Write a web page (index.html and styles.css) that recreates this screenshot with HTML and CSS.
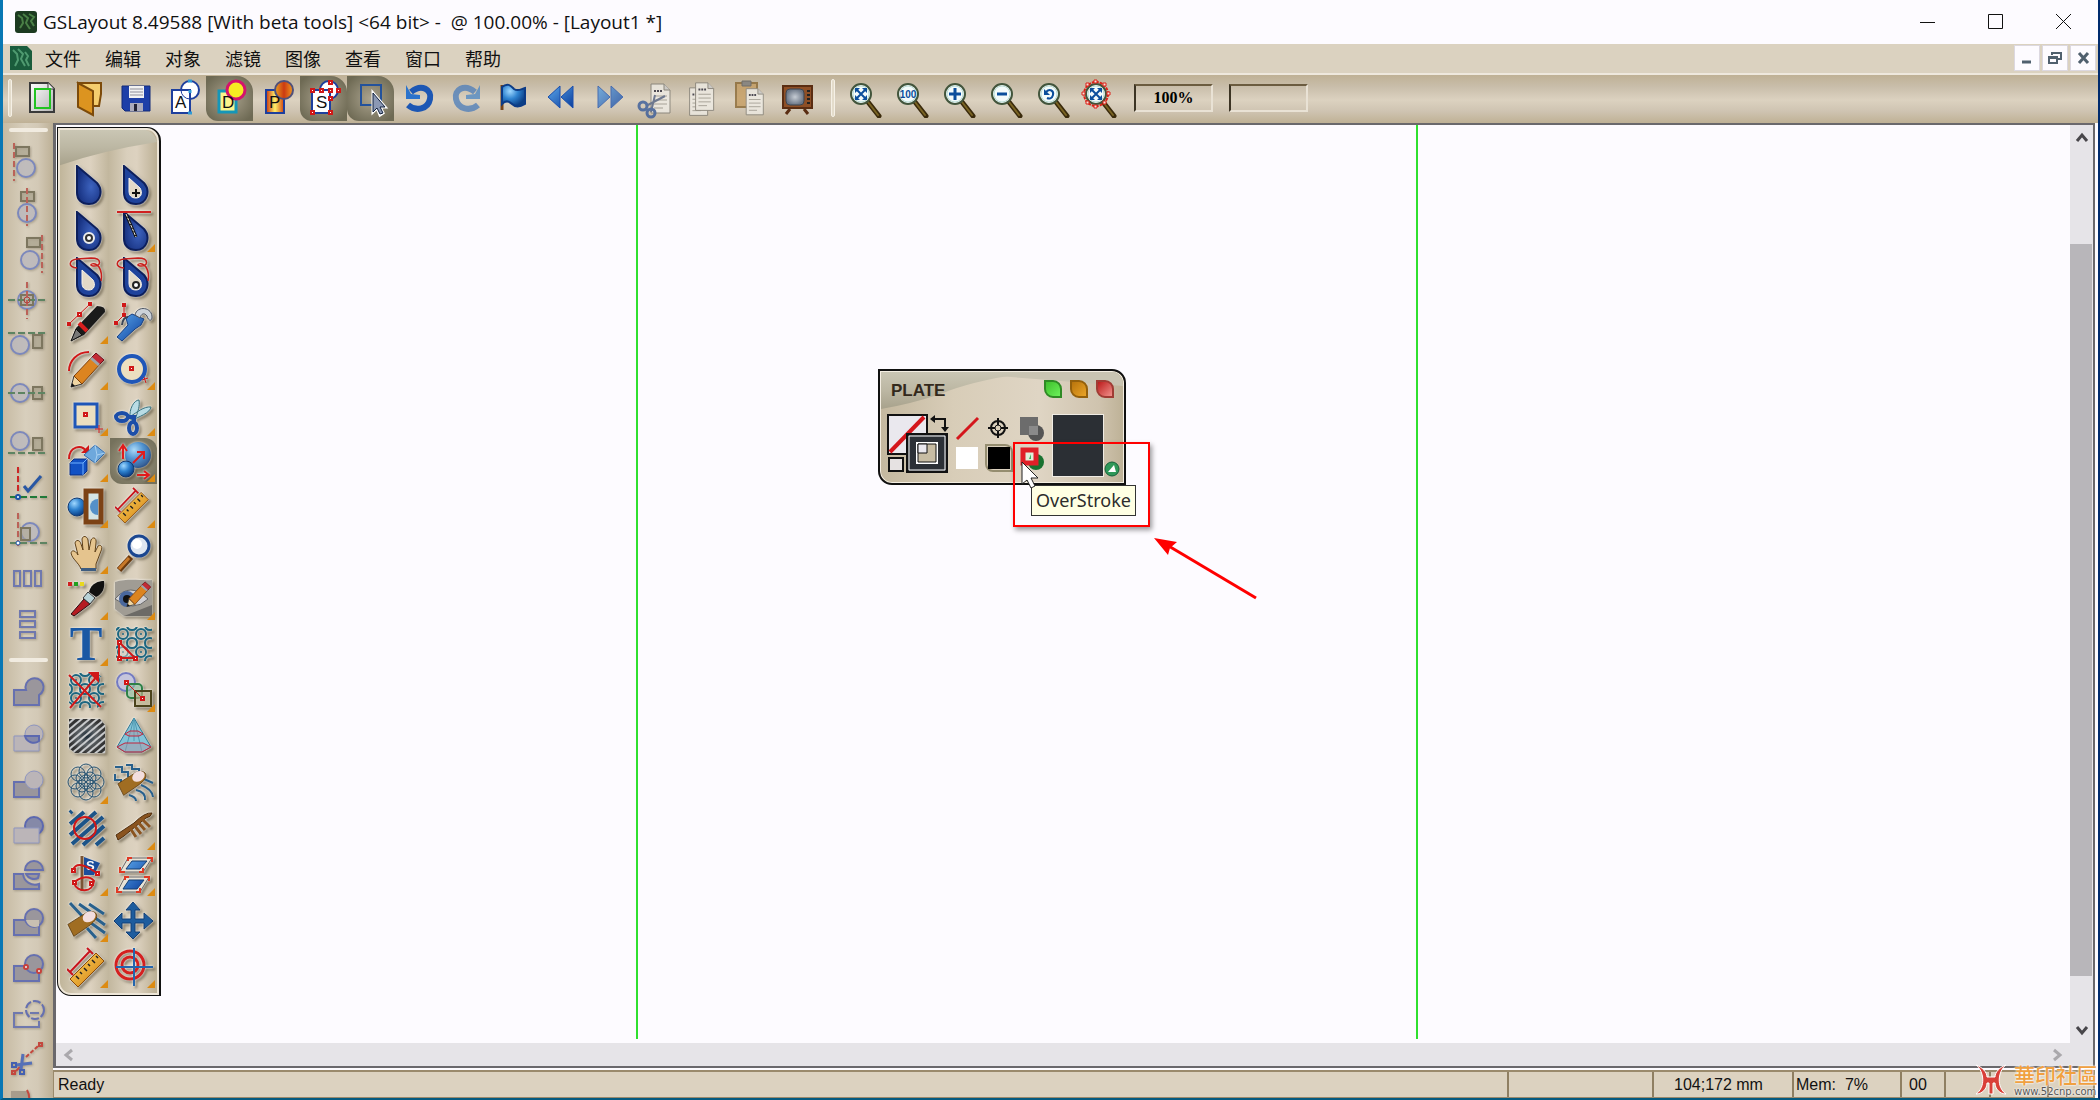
FILE: index.html
```html
<!DOCTYPE html>
<html lang="zh-CN">

<head>
  <meta charset="UTF-8" />
  <meta name="viewport" content="width=device-width, initial-scale=1.0" />
  <title>GSLayout</title>
  <link rel="stylesheet" href="styles.css">
</head>

<body>
  <!-- shared shapes and gradients -->
  <svg class="defs" width="0" height="0" aria-hidden="true">
    <defs>
      <linearGradient id="blue" x1="0" y1="0" x2="1" y2="1"><stop offset="0" stop-color="#5aa6ea" /><stop offset="1" stop-color="#0a3d9c" /></linearGradient>
      <radialGradient id="ball" cx=".35" cy=".3" r=".7"><stop offset="0" stop-color="#9fd8ff" /><stop offset=".5" stop-color="#2f83d0" /><stop offset="1" stop-color="#0b3f86" /></radialGradient>
      <radialGradient id="navy" cx=".6" cy=".55" r=".6"><stop offset="0" stop-color="#3d63bf" /><stop offset="1" stop-color="#16307f" /></radialGradient>
      <linearGradient id="gold" x1="0" y1="0" x2="1" y2="1"><stop offset="0" stop-color="#ffd95e" /><stop offset="1" stop-color="#d07a10" /></linearGradient>
      <linearGradient id="paper" x1="0" y1="0" x2="1" y2="1"><stop offset="0" stop-color="#fff" /><stop offset="1" stop-color="#b4b4b4" /></linearGradient>
      <linearGradient id="fire" x1="0" x2="1"><stop offset="0" stop-color="#c8300c" /><stop offset=".5" stop-color="#fff06a" /><stop offset="1" stop-color="#d0400c" /></linearGradient>
      <linearGradient id="fire2" x1="0" x2="1"><stop offset="0" stop-color="#e8a020" /><stop offset=".5" stop-color="#cc3a12" /><stop offset="1" stop-color="#f09a20" /></linearGradient>
      <radialGradient id="tube"><stop offset="0" stop-color="#c6ccd4" /><stop offset="1" stop-color="#6b7686" /></radialGradient>
      <radialGradient id="steel"><stop offset="0" stop-color="#1c2a36" /><stop offset=".5" stop-color="#5c6266" /><stop offset="1" stop-color="#333" /></radialGradient>
      <linearGradient id="sweep" x1="0" y1="0" x2="0" y2="1"><stop offset="0" stop-color="#cac6b4" /><stop offset=".5" stop-color="#bcb7a3" /><stop offset="1" stop-color="#a8a28c" /></linearGradient>
      <pattern id="hatch" width="5" height="5" patternUnits="userSpaceOnUse" patternTransform="rotate(50)"><rect width="2" height="5" fill="#c8cacc" /></pattern>
      <pattern id="rings" width="18" height="18" patternUnits="userSpaceOnUse"><circle cx="9" cy="9" r="5" fill="none" stroke="#1c6680" stroke-width="2" /><circle cx="9" cy="9" r="1" fill="#1c6680" /><path d="M0 5Q5 5 5 0M13 0Q13 5 18 5M0 13Q5 13 5 18M13 18Q13 13 18 13" fill="none" stroke="#1c6680" stroke-width="2" /></pattern>
    </defs>
    <symbol id="drop" viewBox="0 0 40 40">
      <path d="M10 1L30 18C37 26 33 39 22 39C14 39 10 34 10 28Z" fill="url(#navy)" stroke="#0d1f5c" stroke-width="2" />
    </symbol>
    <symbol id="drop-open" viewBox="0 0 40 40">
      <path d="M10 1L30 18C37 26 33 39 22 39C14 39 10 34 10 28Z" fill="#1f439c" stroke="#0d1f5c" stroke-width="2" />
      <path d="M15 13L26 23C29 28 27 33 22 33C17 33 15 30 15 26Z" fill="#e2d9c8" stroke="#f8f4ec" />
    </symbol>
    <symbol id="scribble" viewBox="0 0 40 40">
      <path d="M10 11C0 10 2 3 10 2L24 1C36 1 34 10 26 9C20 8 28 4 32 10C35 15 35 19 34 24" fill="none" stroke="#c8201c" stroke-width="1.5" />
    </symbol>
    <symbol id="lens" viewBox="0 0 40 40">
      <path d="M22 24L33 38" stroke="#3a2a0c" stroke-width="5" stroke-linecap="round" />
      <path d="M22 24L32 37" stroke="#7a6424" stroke-width="2" stroke-linecap="round" />
      <circle cx="15" cy="16" r="10" fill="#f4fbfb" stroke="#42553c" stroke-width="2" />
      <circle cx="15" cy="16" r="8" fill="none" stroke="#b8dcd4" stroke-width="1" />
    </symbol>
    <symbol id="expand" viewBox="0 0 40 40">
      <path d="M11 12L19 20M19 12L11 20" stroke="#0b4e9c" stroke-width="2" />
      <path d="M9 10H14L9 15ZM21 10V15L16 10ZM9 22V17L14 22ZM21 22H16L21 17Z" fill="#0b4e9c" />
    </symbol>
    <symbol id="sheet" viewBox="0 0 40 40">
      <path d="M8 3H21L27 9V32H8Z" fill="#f1efe9" stroke="#77746c" stroke-width="1" />
      <path d="M21 3V9H27" fill="#ccc" stroke="#77746c" stroke-width="1" />
      <path d="M11 10H19" stroke="#223" stroke-width="2" stroke-dasharray="2 1" />
      <path d="M11 15H24M11 19H24M11 23H24M11 27H20" stroke="#96938b" stroke-width="1" />
    </symbol>
    <symbol id="finger" viewBox="0 0 40 40">
      <path d="M1 24L20 12C26 7 36 8 35 15C34 20 28 24 24 27L8 38Z" fill="#a06d22" stroke="#5d3c10" stroke-width="1" />
      <ellipse cx="26" cy="15" rx="8" ry="6" fill="#f3dede" transform="rotate(-30 26 15)" />
    </symbol>
    <symbol id="ruler" viewBox="0 0 40 40">
      <path d="M3 32L29 6L37 14L11 40Z" fill="url(#gold)" stroke="#8a4a08" stroke-width="1" />
      <path d="M9 29l3 3M13 25l2 2M17 21l3 3M21 17l2 2M25 13l3 3M29 9l2 2" stroke="#222" stroke-width="1.5" />
      <path d="M0 22L6 28M20 1L26 7M3 25L23 4" fill="none" stroke="#c8141c" stroke-width="2" />
    </symbol>
    <symbol id="pencil" viewBox="0 0 40 40">
      <path d="M4 38L7 27L15 35Z" fill="#f0d6a4" stroke="#333" />
      <path d="M7 27L26 7L34 14L15 35Z" fill="#dc8420" stroke="#7a3d08" />
      <path d="M24 9L29 4L37 11L32 16Z" fill="#c22a34" stroke="#6a1018" />
      <path d="M23 10L25 8L33 15L31 17Z" fill="#9ca3ab" />
      <path d="M4 38L5 34L8 37Z" fill="#111" />
    </symbol>
  </svg>

  <header class="titlebar">
    <svg class="app-icon" viewBox="0 0 22 22"><rect width="22" height="22" rx="3" fill="#1c3a20" /><path d="M3 4l4 3 1 5-3 5M8 3l5 4-2 5 4 6M14 3l5 3-3 4 3 5" fill="none" stroke="#4a8046" stroke-width="2" /></svg>
    <h1>GSLayout 8.49588 [With beta tools] &lt;64 bit&gt; -&nbsp; @ 100.00% - [Layout1 *]</h1>
    <div class="window-controls">
      <button aria-label="Minimize"><svg viewBox="0 0 16 16"><path d="M0 8.500H15" /></svg></button>
      <button aria-label="Maximize"><svg viewBox="0 0 16 16"><path d="M.5.5H14.500V14.500H.5Z" /></svg></button>
      <button aria-label="Close"><svg viewBox="0 0 16 16"><path d="M0 0L15 15M15 0L0 15" /></svg></button>
    </div>
  </header>

  <nav class="menubar">
    <svg class="doc-icon" viewBox="0 0 22 24"><path d="M0 0H17L22 5V24H0Z" fill="#1a5c3c" /><path d="M3 4l4 4 1 6-3 6M8 3l5 5-2 5 4 7M15 6l3 4-2 4 3 6" fill="none" stroke="#4f9a70" stroke-width="2" /></svg>
    <div class="menus">
      <button>文件</button>
      <button>编辑</button>
      <button>对象</button>
      <button>滤镜</button>
      <button>图像</button>
      <button>查看</button>
      <button>窗口</button>
      <button>帮助</button>
    </div>
    <div class="mdi-controls">
      <button aria-label="Minimize document"><svg viewBox="0 0 14 14"><path d="M2 11H11" stroke-width="3" /></svg></button>
      <button aria-label="Restore document"><svg viewBox="0 0 14 14"><path d="M4 4V2H13V8H10M4 2H13" stroke-width="2" /><path d="M1 6H9V12H1ZM1 7H9" stroke-width="2" /></svg></button>
      <button aria-label="Close document"><svg viewBox="0 0 14 14"><path d="M3 2L12 12M12 2L3 12" stroke-width="3" /></svg></button>
    </div>
  </nav>

  <div class="toolbar">
    <span class="grip"></span>
    <div class="tool-group">
      <button aria-label="New"><svg viewBox="0 0 40 40"><path d="M8 5H26L32 11V34H8Z" fill="url(#paper)" stroke="#3a3a3a" stroke-width="2" /><path d="M26 5V11H32" fill="#eee" stroke="#3a3a3a" /><path d="M13 11H28V30H13Z" fill="none" stroke="#22c322" stroke-width="2" /></svg></button>
      <button aria-label="Open"><svg viewBox="0 0 40 40"><path d="M9 5H32V16L30 28H20Z" fill="#f4cd6e" stroke="#7d4b0a" stroke-width="2" /><path d="M9 5L24 13V37L9 29Z" fill="#dc9420" stroke="#7d4b0a" stroke-width="2" /></svg></button>
      <button aria-label="Save"><svg viewBox="0 0 40 40"><path d="M6 8H34V33H9L6 30Z" fill="#1d3fa8" stroke="#122a78" /><path d="M13 8H28V20H13Z" fill="#f2f2f2" /><path d="M14 11H27M14 14H27M14 17H27" stroke="#8e8e9a" /><path d="M14 25H27V33H14Z" fill="#aab" /><path d="M18 26H21V33H18Z" fill="#223" /></svg></button>
      <button aria-label="Artwork view"><svg viewBox="0 0 40 40"><circle cx="27" cy="12" r="9" fill="#fff" stroke="#1e3f9e" stroke-width="2" /><path d="M9 12H27V35H9Z" fill="#fff" stroke="#1e3f9e" stroke-width="2" /><path d="M18 12A9 9 0 0 0 27 21" fill="none" stroke="#1e3f9e" stroke-width="1" /><path d="M25 3h4M27 12V15M25 35h4" stroke="#2e9ad6" stroke-width="3" /><text x="12" y="30" class="badge-letter">A</text></svg></button>
      <button class="active" aria-label="Draft view"><svg viewBox="0 0 40 40"><path d="M9 13H26V34H9Z" fill="#fbf48c" stroke="#1596b8" stroke-width="3" /><circle cx="26" cy="12" r="9" fill="#f6ec22" stroke="#d4146c" stroke-width="3" /><text x="12" y="30" class="badge-letter">D</text></svg></button>
      <button aria-label="Preview"><svg viewBox="0 0 40 40"><path d="M9 12H27V35H9Z" fill="url(#fire)" stroke="#1e3f9e" stroke-width="2" /><circle cx="27" cy="12" r="9" fill="url(#fire2)" stroke="#50507a" stroke-width="2" /><text x="12" y="30" class="badge-letter">P</text></svg></button>
      <button class="active" aria-label="Selection view"><svg viewBox="0 0 40 40"><circle cx="25" cy="12" r="9" fill="#fff" stroke="#1e3f9e" stroke-width="2" /><path d="M8 12H26V35H8Z" fill="#fff" stroke="#1e3f9e" stroke-width="2" /><path d="M7 11h3v3H7ZM16 11h3v3h-3ZM25 11h3v3h-3ZM33 11h3v3h-3ZM25 3h3v3h-3ZM25 19h3v3h-3ZM25 33h3v3h-3ZM7 33h3v3H7Z" fill="#fff" stroke="#d01818" stroke-width="2" /><text x="12" y="30" class="badge-letter">S</text></svg></button>
      <button class="active" aria-label="Select box"><svg viewBox="0 0 40 40"><path d="M10 7H30V27H10Z" fill="none" stroke="#23529c" stroke-width="2" /><path d="M22 15V34L26 30L29 37L32 35L29 29H34Z" fill="#aab4c8" stroke="#fff" stroke-width="3" /><path d="M22 15V34L26 30L29 36L32 35L29 29H34Z" fill="#8b98b4" stroke="#10203c" stroke-width="1" /></svg></button>
      <button aria-label="Undo"><svg viewBox="0 0 40 40"><path d="M13 14C24 5 34 12 32 21C30 31 18 34 10 27" fill="none" stroke="#1c57b4" stroke-width="6" /><path d="M8 7V21H22V17L13 16Z" fill="#2b73cc" /></svg></button>
      <button class="faded" aria-label="Redo"><svg viewBox="0 0 40 40"><path d="M30 14C19 5 9 12 11 21C13 31 25 34 33 27" fill="none" stroke="#4a7cba" stroke-width="6" /><path d="M35 7V21H21V17L30 16Z" fill="#4a86c4" /></svg></button>
      <button aria-label="Flag"><svg viewBox="0 0 40 40"><path d="M10 7V32" stroke="#76441a" stroke-width="3" /><path d="M10 9C16 4 19 8 22 11C26 14 29 11 33 10V26C28 29 24 30 20 26C17 23 14 22 10 26Z" fill="url(#ball)" stroke="#0c3b86" stroke-width="2" /></svg></button>
      <button aria-label="Previous"><svg viewBox="0 0 40 40"><path d="M21 8V30L9 19ZM34 8V30L22 19Z" fill="url(#blue)" stroke="#1a4fae" /></svg></button>
      <button class="faded" aria-label="Next"><svg viewBox="0 0 40 40"><path d="M12 8V30L24 19ZM25 8V30L37 19Z" fill="url(#blue)" stroke="#1a4fae" /></svg></button>
      <button class="faded" aria-label="Cut"><svg viewBox="0 0 40 40"><use href="#sheet" x="10" y="3" width="40" height="40" /><path d="M13 28L32 18M18 34L22 17" stroke="#4a5c80" stroke-width="2" /><circle cx="10" cy="28" r="4" fill="none" stroke="#2e5498" stroke-width="3" /><circle cx="18" cy="35" r="4" fill="none" stroke="#2e5498" stroke-width="3" /></svg></button>
      <button class="faded" aria-label="Copy"><svg viewBox="0 0 40 40"><use href="#sheet" x="2" y="7" width="38" height="38" /><use href="#sheet" x="8" y="2" width="38" height="38" /></svg></button>
      <button class="faded" aria-label="Paste"><svg viewBox="0 0 40 40"><path d="M9 5H30V29H9Z" fill="#c49a5c" stroke="#86632c" stroke-width="2" /><path d="M15 3H24V8H15Z" fill="#777" stroke="#555" /><use href="#sheet" x="12" y="8" width="36" height="36" /></svg></button>
      <button aria-label="Monitor"><svg viewBox="0 0 40 40"><path d="M16 31L12 36M30 31L34 36" stroke="#5a2d12" stroke-width="3" /><path d="M9 8H38V30H9Z" fill="#8e4f26" stroke="#5a2d12" stroke-width="2" /><rect x="12" y="11" width="18" height="16" rx="4" fill="url(#tube)" stroke="#3f4650" /><path d="M33 13h3M33 17h3M33 21h3M33 25h3" stroke="#222" stroke-width="2" /></svg></button>
    </div>
    <span class="grip"></span>
    <div class="tool-group zoom-group">
      <button aria-label="Fit window"><svg viewBox="0 0 40 40"><use href="#lens" /><use href="#expand" /></svg></button>
      <button aria-label="Actual size"><svg viewBox="0 0 40 40"><use href="#lens" /><text x="15" y="20" class="lens-text">100</text></svg></button>
      <button aria-label="Zoom in"><svg viewBox="0 0 40 40"><use href="#lens" /><path d="M9 16H21M15 10V22" stroke="#0b4e9c" stroke-width="3" /></svg></button>
      <button aria-label="Zoom out"><svg viewBox="0 0 40 40"><use href="#lens" /><path d="M10 16H20" stroke="#0b4e9c" stroke-width="3" /></svg></button>
      <button aria-label="Previous zoom"><svg viewBox="0 0 40 40"><use href="#lens" /><path d="M12 14C16 10 20 13 19 17C18 21 15 21 13 20" fill="none" stroke="#0b4e9c" stroke-width="2" /><path d="M10 11V17H16Z" fill="#0b4e9c" /></svg></button>
      <button aria-label="Zoom to selection"><svg viewBox="0 0 40 40"><use href="#lens" /><use href="#expand" /><circle cx="15" cy="16" r="12" fill="none" stroke="#dc2018" stroke-width="2" stroke-dasharray="3 1" /><path d="M13 2h3v3h-3ZM13 27h3v3h-3ZM1 14h3v3H1ZM26 14h3v3h-3ZM5 5h3v3H5ZM22 5h3v3h-3ZM5 23h3v3H5ZM22 23h3v3h-3Z" fill="#f6e0d8" stroke="#dc2018" /></svg></button>
    </div>
    <input class="field" type="text" value="100%" aria-label="Zoom level">
    <input class="field" type="text" value="" aria-label="Value">
  </div>

  <main class="workspace">
    <aside class="sidebar">
      <span class="rule"></span>
      <button aria-label="Align left"><svg viewBox="0 0 40 40"><path class="v" d="M6 2V40" /><path class="box" d="M8 6H21V15H8Z" /><circle class="disc" cx="18" cy="27" r="9" /></svg></button>
      <button aria-label="Align centre"><svg viewBox="0 0 40 40"><path class="box" d="M13 5H26V14H13Z" /><circle class="disc" cx="19" cy="26" r="9" /><path class="v" d="M19 1V39" /></svg></button>
      <button aria-label="Align right"><svg viewBox="0 0 40 40"><path class="v" d="M34 2V40" /><path class="box" d="M19 5H32V14H19Z" /><circle class="disc" cx="22" cy="27" r="9" /></svg></button>
      <button aria-label="Centre both"><svg viewBox="0 0 40 40"><circle class="disc" cx="19" cy="21" r="9" /><path class="box" d="M13 16H25V26H13Z" /><path class="v" d="M19 3V40" /><path class="h" d="M0 21H40" /><circle cx="19" cy="21" r="3" fill="none" stroke="#b5403a" /></svg></button>
      <button aria-label="Align top"><svg viewBox="0 0 40 40"><path class="h" d="M0 8H39" /><circle class="disc" cx="12" cy="20" r="9" /><path class="box" d="M25 10H34V23H25Z" /></svg></button>
      <button aria-label="Align middle"><svg viewBox="0 0 40 40"><circle class="disc" cx="12" cy="22" r="9" /><path class="box" d="M25 16H34V28H25Z" /><path class="h" d="M0 22H39" /></svg></button>
      <button aria-label="Align bottom"><svg viewBox="0 0 40 40"><circle class="disc" cx="12" cy="24" r="9" /><path class="box" d="M25 21H34V33H25Z" /><path class="h" d="M0 36H39" /></svg></button>
      <button aria-label="Set origin" class="strong"><svg viewBox="0 0 40 40"><path class="v" d="M10 4V40" /><path class="h" d="M2 34H39" /><circle cx="10" cy="34" r="2" fill="#fff" stroke="#1a55a8" stroke-width="2" /><path d="M16 23L20 28L33 13" fill="none" stroke="#2957a4" stroke-width="3" /></svg></button>
      <button aria-label="Move to origin"><svg viewBox="0 0 40 40"><path class="v" d="M10 4V40" /><path class="h" d="M2 34H39" /><circle class="disc" cx="22" cy="23" r="9" /><path class="box" d="M13 19H22V31H13Z" /><circle cx="10" cy="34" r="2" fill="#fff" stroke="#1a55a8" /></svg></button>
      <button aria-label="Distribute columns"><svg viewBox="0 0 40 40"><path class="bars" d="M6 16H12V31H6ZM16 16H23V31H16ZM27 16H33V31H27Z" /></svg></button>
      <button aria-label="Distribute rows"><svg viewBox="0 0 40 40"><path class="bars" d="M12 10H27V16H12ZM12 20H27V26H12ZM12 31H27V37H12Z" /></svg></button>
      <span class="rule"></span>
      <button aria-label="Unite"><svg viewBox="0 0 40 40"><path class="solid" d="M6 19H18A9 9 0 1 1 31 24V34H6Z" /></svg></button>
      <button aria-label="Intersect"><svg viewBox="0 0 40 40"><path class="light" d="M6 19H31V34H6Z" /><circle class="light" cx="26" cy="17" r="9" /><path class="dark" d="M17 19H31V24A9 9 0 0 1 17 19Z" /></svg></button>
      <button aria-label="Subtract front"><svg viewBox="0 0 40 40"><path class="solid" d="M6 19H31V34H6Z" /><circle class="light" cx="26" cy="17" r="9" /></svg></button>
      <button aria-label="Subtract back"><svg viewBox="0 0 40 40"><circle class="dark" cx="26" cy="17" r="9" /><path class="light" d="M6 19H31V34H6Z" /></svg></button>
      <button aria-label="Divide"><svg viewBox="0 0 40 40"><path class="solid" d="M6 19H15A12 12 0 0 0 31 29V34H6Z" /><path class="solid" d="M17 15A9 9 0 0 1 35 15ZM18 19H31L30 23A9 9 0 0 1 18 19Z" /></svg></button>
      <button aria-label="Trim"><svg viewBox="0 0 40 40"><path class="solid" d="M6 19H31V34H6Z" /><circle class="solid" cx="26" cy="17" r="9" /><path d="M18 19H31V25A9 9 0 0 1 18 19Z" fill="#c9c0b2" /></svg></button>
      <button aria-label="Add nodes"><svg viewBox="0 0 40 40"><path class="solid" d="M6 19H31V34H6Z" /><circle class="solid" cx="26" cy="17" r="9" /><circle cx="18" cy="20" r="2" fill="#eee" stroke="#c8403a" stroke-width="2" /><circle cx="31" cy="24" r="2" fill="#eee" stroke="#c8403a" stroke-width="2" /></svg></button>
      <button aria-label="Outline"><svg viewBox="0 0 40 40"><path class="bars" d="M15 20H6V34H31V28" /><circle cx="27" cy="17" r="9" fill="none" stroke="#6670b0" stroke-width="2" stroke-dasharray="8 2" /><path class="bars" d="M22 20H31" /></svg></button>
      <button aria-label="Cut path"><svg viewBox="0 0 40 40"><path d="M18 18L30 7" stroke="#c4483e" stroke-width="2" stroke-dasharray="4 2" /><path d="M31 4h3v3h-3ZM4 32h3v3H4ZM8 32l4-4" fill="none" stroke="#c4483e" stroke-width="2" /><path d="M8 26L24 24M13 30L15 15" stroke="#5570b8" stroke-width="3" /><path d="M4 24h4v4H4ZM12 31h4v4h-4Z" fill="none" stroke="#4460b0" stroke-width="2" /></svg></button>
      <button aria-label="Join path"><svg viewBox="0 0 40 40"><path d="M3 6H20V34H3Z" fill="#a69c8c" /><path d="M19 5Q23 12 20 20" fill="none" stroke="#c4483e" stroke-width="2" /></svg></button>
    </aside>

    <div class="content">
      <div class="viewport">
        <section class="canvas">
          <span class="guide guide-left"></span>
          <span class="guide guide-right"></span>

          <div class="tools">
            <svg class="tools-sweep" viewBox="0 0 100 40" preserveAspectRatio="none"><path d="M0 0H88Q97 2 100 13Q45 22 0 38Z" fill="url(#sweep)" /></svg>
            <button aria-label="Select"><svg viewBox="0 0 40 40"><use href="#drop" /></svg></button>
            <button aria-label="Add point"><svg viewBox="0 0 40 40"><use href="#drop-open" /><path d="M18 28H26M22 24V32" stroke="#111" stroke-width="2" /></svg></button>
            <button aria-label="Edit point"><svg viewBox="0 0 40 40"><use href="#drop" /><circle cx="22" cy="27" r="5" fill="#333" stroke="#eee" stroke-width="2" /><circle cx="22" cy="27" r="2" fill="#fff" /></svg></button>
            <button class="more" aria-label="Cut point"><svg viewBox="0 0 40 40"><use href="#drop" /><path d="M12 3L22 26" stroke="#111" stroke-width="3" /><path d="M12 3L22 26" stroke="#eee" stroke-width="1" stroke-dasharray="3 1" /><path d="M3 1H37" stroke="#d02020" stroke-width="2" /></svg></button>
            <button aria-label="Lasso"><svg viewBox="0 0 40 40"><use href="#drop-open" /><use href="#scribble" /></svg></button>
            <button aria-label="Lasso point"><svg viewBox="0 0 40 40"><use href="#drop-open" /><circle cx="22" cy="28" r="3" fill="#fff" stroke="#222" stroke-width="2" /><use href="#scribble" /></svg></button>
            <button class="more" aria-label="Pen"><svg viewBox="0 0 40 40"><path d="M2 21L23 1" stroke="#d01818" stroke-width="1" /><path d="M11 10h3v3h-3ZM1 20h2v2H1ZM22 0h2v2h-2Z" fill="#fff" stroke="#d01818" stroke-width="2" /><path d="M4 38L9 25L30 3Q39 3 38 9L17 32Z" fill="#1a1a1a" /><path d="M12 20L20 28" stroke="#d81e1e" stroke-width="4" /><path d="M4 38L9 26L15 32Z" fill="#777" stroke="#111" /></svg></button>
            <button aria-label="Wrench"><svg viewBox="0 0 40 40"><path d="M2 20L10 12V3" fill="none" stroke="#d01818" /><path d="M1 19h2v2H1ZM9 11h2v2H9ZM9 1h2v2H9Z" fill="#fff" stroke="#d01818" stroke-width="2" /><path d="M3 34L14 22L12 15L18 11L30 16L27 22L21 26L8 38Z" fill="url(#blue)" stroke="#123c80" /><path d="M8 22Q9 14 14 14" fill="none" stroke="#3a4656" stroke-width="2" /><path d="M21 12C23 2 39 4 38 15C37 19 34 17 33 13C30 9 27 11 26 15Z" fill="#ccd2da" stroke="#4a5260" /></svg></button>
            <button class="more" aria-label="Pencil"><svg viewBox="0 0 40 40"><path d="M2 22C2 12 10 3 22 3" fill="none" stroke="#d01818" stroke-width="2" /><use href="#pencil" /></svg></button>
            <button class="more" aria-label="Ellipse"><svg viewBox="0 0 40 40"><circle cx="18" cy="20" r="13" fill="#ecdfc0" stroke="#1f56b8" stroke-width="4" /><path d="M16 18h3v3h-3Z" fill="#fff" stroke="#d01818" stroke-width="2" /><path d="M28 31l6-2M30 28l2 6" stroke="#d01818" stroke-width="1" /></svg></button>
            <button class="more" aria-label="Rectangle"><svg viewBox="0 0 40 40"><path d="M8 9H30V32H8Z" fill="#ecdfc0" stroke="#1f56b8" stroke-width="3" /><path d="M17 18h3v3h-3Z" fill="#fff" stroke="#d01818" stroke-width="2" /><path d="M28 34h8M32 30v8" stroke="#d01818" stroke-width="1" /></svg></button>
            <button class="more" aria-label="Scissors"><svg viewBox="0 0 40 40"><path d="M16 23C15 14 20 5 25 5C26 11 24 16 22 22ZM17 25C24 23 37 17 37 12C30 11 22 18 17 21Z" fill="#b9dce4" stroke="#35707c" /><ellipse cx="8" cy="22" rx="6" ry="4" fill="none" stroke="#1c4ea8" stroke-width="4" /><ellipse cx="19" cy="33" rx="4" ry="6" fill="none" stroke="#1c4ea8" stroke-width="4" /><path d="M12 22H20V29" fill="none" stroke="#1c4ea8" stroke-width="4" /></svg></button>
            <button class="more" aria-label="Rotate"><svg viewBox="0 0 40 40"><path d="M2 18C2 6 14 2 20 11" fill="none" stroke="#d01818" stroke-width="2" /><path d="M14 12H22V4Z" fill="#d01818" /><path d="M17 14L28 4L38 12L28 22Z" fill="#6ea8dc" stroke="#3568a4" /><path d="M28 4L30 14L38 12M30 14L28 22" fill="none" stroke="#a9d0f0" /><path d="M3 22L7 18H20V30L16 34H3Z" fill="#1251c4" stroke="#0a2f80" /><path d="M3 22H16V34M16 22L20 18" fill="none" stroke="#6fb0ff" /></svg></button>
            <button class="more active" aria-label="Scale"><svg viewBox="0 0 40 40"><circle cx="24" cy="14" r="13" fill="url(#ball)" opacity=".8" /><circle cx="12" cy="28" r="8" fill="url(#ball)" stroke="#11376c" /><path d="M9 18V5M5 10L9 4L13 10M19 22L29 12M23 11H30V18M23 34H35M30 30L35 34L30 38" fill="none" stroke="#e01c1c" stroke-width="2" /></svg></button>
            <button class="more" aria-label="Mirror"><svg viewBox="0 0 40 40"><circle cx="10" cy="20" r="9" fill="url(#ball)" stroke="#11376c" /><path d="M19 4H34V35H19Z" fill="#d5e4e4" stroke="#7c4215" stroke-width="5" /><path d="M31 12A8 8 0 0 0 31 28Z" fill="#5490c8" /></svg></button>
            <button class="more" aria-label="Measure"><svg viewBox="0 0 40 40"><use href="#ruler" width="36" height="36" x="1" y="0" /></svg></button>
            <button class="more" aria-label="Hand"><svg viewBox="0 0 40 40"><path d="M14 36C12 30 5 26 4 20C5 16 9 18 11 22L8 10C9 6 13 7 14 11L16 17L15 6C16 2 20 3 21 7L22 17L24 7C26 3 30 5 29 10L28 19L31 13C34 11 36 14 34 18L29 31V36Z" fill="#e5c48e" stroke="#5d3f17" stroke-width="1" /><path d="M14 35H29V38H14Z" fill="#3d5c80" /></svg></button>
            <button aria-label="Zoom"><svg viewBox="0 0 40 40"><path d="M5 37L17 24" stroke="#6b3a0e" stroke-width="6" /><path d="M5 36L15 25" stroke="#c8792a" stroke-width="3" /><circle cx="25" cy="13" r="10" fill="#dfe6f0" stroke="#1a4690" stroke-width="3" /><circle cx="23" cy="11" r="5" fill="#fff" /></svg></button>
            <button class="more" aria-label="Brush"><svg viewBox="0 0 40 40"><path d="M1 3h4v4H1Z" fill="#d02020" /><path d="M7 3h4v4H7Z" fill="#20a020" /><path d="M13 3h4v4h-4Z" fill="#e8d820" /><path d="M4 35L17 20L23 25L7 37Z" fill="#b51b22" stroke="#2a0a0c" /><path d="M16 19L21 13L28 19L23 25Z" fill="#b9d3d8" stroke="#333" /><path d="M22 13C24 4 32 2 37 2C38 8 36 15 29 18Z" fill="#111" /></svg></button>
            <button class="more" aria-label="Retouch"><svg viewBox="0 0 40 40"><path d="M1 3C14 -1 28 2 38 1V37H10L1 30Z" fill="#a09c94" /><path d="M1 20Q16 2 34 20Q20 34 1 20" fill="#d0d0d4" stroke="#666" /><circle cx="13" cy="20" r="8" fill="#49679c" /><circle cx="13" cy="20" r="4" fill="#111" /><path d="M10 37L38 26V37Z" fill="#6c6a66" /><use href="#pencil" x="10" y="0" width="29" height="29" /></svg></button>
            <button class="more" aria-label="Text"><svg viewBox="0 0 40 40"><text x="19" y="35" class="big-t">T</text></svg></button>
            <button aria-label="Pattern"><svg viewBox="0 0 40 40"><path d="M2 2H38V36H2Z" fill="url(#rings)" /><path d="M5 17V33H21Z" fill="#e0d8c8" fill-opacity=".5" stroke="#d01818" stroke-width="2" /><path d="M4 16h3v3H4ZM4 32h3v3H4ZM20 32h3v3h-3Z" fill="#fff" stroke="#d01818" stroke-width="2" /></svg></button>
            <button aria-label="Remove pattern"><svg viewBox="0 0 40 40"><path d="M2 8L8 2H30L37 8V32L30 37H8L2 32Z" fill="url(#rings)" /><path d="M2 4L34 36M3 37L30 5" stroke="#d01818" stroke-width="2" /><path d="M21 1H32V12Z" fill="#d01818" /></svg></button>
            <button class="more" aria-label="Blend"><svg viewBox="0 0 40 40"><circle cx="12" cy="11" r="9" fill="#c5c5dc" stroke="#4a56b8" stroke-width="2" stroke-opacity=".7" /><rect x="13" y="13" width="15" height="14" rx="4" fill="#8fc09c" stroke="#2e8046" stroke-width="2" fill-opacity=".6" /><path d="M21 20H37V35H21Z" fill="#b8ac84" fill-opacity=".7" stroke="#4b431c" stroke-width="2" /><path d="M12 11L28 27" stroke="#d01818" /><path d="M11 10h3v3h-3ZM27 26h3v3h-3Z" fill="#fff" stroke="#d01818" stroke-width="2" /></svg></button>
            <button aria-label="Hatch fill"><svg viewBox="0 0 40 40"><path d="M2 2H33L38 8V36H8L2 31Z" fill="url(#steel)" /><path d="M2 2H33L38 8V36H8L2 31Z" fill="url(#hatch)" /></svg></button>
            <button aria-label="Cone"><svg viewBox="0 0 40 40"><path d="M20 1L37 30L28 35H11L3 30Z" fill="#84c4d8" stroke="#2e7590" /><path d="M20 1V24M20 1L11 35M20 1L28 35" stroke="#4f98b0" /><path d="M3 30L11 26H29L37 30L28 35H11ZM11 17L16 14H24L29 17L25 19H15Z" fill="#a89aa8" fill-opacity=".5" stroke="#c2243c" stroke-width="1" /></svg></button>
            <button class="more" aria-label="Rosette"><svg viewBox="0 0 40 40"><g fill="none" stroke="#24506e" stroke-width="1"><circle cx="19" cy="19" r="7" /><circle cx="19" cy="8" r="7" /><circle cx="19" cy="30" r="7" /><circle cx="8" cy="19" r="7" /><circle cx="30" cy="19" r="7" /><circle cx="11" cy="11" r="7" /><circle cx="27" cy="11" r="7" /><circle cx="11" cy="27" r="7" /><circle cx="27" cy="27" r="7" /><circle cx="15" cy="15" r="6" /><circle cx="23" cy="15" r="6" /><circle cx="15" cy="23" r="6" /><circle cx="23" cy="23" r="6" /></g></svg></button>
            <button aria-label="Smooth"><svg viewBox="0 0 40 40"><path d="M1 4H8V9H14V14M12 2H18V6H25V12M1 11V17H7V20M30 16L39 20M27 22Q38 26 39 34M22 27Q32 29 31 37M15 32Q22 34 22 38" fill="none" stroke="#28608c" stroke-width="2" /><use href="#finger" x="3" y="1" width="33" height="33" /></svg></button>
            <button aria-label="Line pattern"><svg viewBox="0 0 40 40"><path d="M3 4L5 2M3 15L17 3M3 26L29 3M5 35L36 8M16 36L37 17M29 36L37 29" stroke="#1c5488" stroke-width="4" /><circle cx="18" cy="19" r="11" fill="none" stroke="#d01818" stroke-width="2" /></svg></button>
            <button class="more" aria-label="Comb"><svg viewBox="0 0 40 40"><path d="M2 26L20 14Q31 3 38 4Q37 8 32 9L10 27L4 31Z" fill="#8a5420" stroke="#4e2c0a" /><path d="M16 19L22 28M20 16L27 25M24 13L31 21M28 10L36 18" stroke="#8a5420" stroke-width="3" /></svg></button>
            <button class="more" aria-label="Spine"><svg viewBox="0 0 40 40"><path d="M15 1V36" stroke="#7a5434" stroke-width="3" /><path d="M17 2L33 8L27 20H17Z" fill="#1b4e9c" /><text x="19" y="15" class="flag-letter">S</text><path d="M30 18C24 14 10 4 6 15M7 28C10 38 26 38 27 26C22 20 12 22 7 28" fill="none" stroke="#d01818" stroke-width="2" /><path d="M5 14h3v3H5ZM29 17h3v3h-3ZM6 26h3v3H6ZM23 27h3v3h-3Z" fill="#fff" stroke="#d01818" stroke-width="2" /></svg></button>
            <button class="more" aria-label="Warp"><svg viewBox="0 0 40 40"><path d="M14 3H38L29 17H6ZM11 22H35L26 37H3Z" fill="#e8e2d6" stroke="#666" /><path d="M18 6H33L26 14H12ZM15 25H30L23 34H9Z" fill="url(#blue)" stroke="#123e74" /><path d="M14 6V3h4M33 3h5v4M29 13v4h-4M6 12v5h5M11 25v-3h4M30 22h5v4M26 33v4h-4M3 32v5h5" fill="none" stroke="#e03a24" stroke-width="2" /></svg></button>
            <button class="more" aria-label="Smudge"><svg viewBox="0 0 40 40"><path d="M3 2L16 16M12 3L25 12M22 3L37 13M27 16L38 24M24 22L38 32M20 27L29 37" fill="none" stroke="#28608c" stroke-width="3" /><use href="#finger" x="0" y="3" width="34" height="34" /></svg></button>
            <button aria-label="Move"><svg viewBox="0 0 40 40"><path d="M19 1L26 9H21V18H30V12L39 20L30 28V22H21V31H26L19 38L12 31H17V22H8V28L0 20L8 12V18H17V9H12Z" fill="#1d5c9e" stroke="#123e74" /></svg></button>
            <button class="more" aria-label="Scale ruler"><svg viewBox="0 0 40 40"><use href="#ruler" /></svg></button>
            <button class="more" aria-label="Target"><svg viewBox="0 0 40 40"><circle cx="16" cy="18" r="14" fill="none" stroke="#d42020" stroke-width="3" /><circle cx="16" cy="18" r="8" fill="none" stroke="#d42020" stroke-width="3" /><path d="M2 20H39M20 1V39" stroke="#2365ae" stroke-width="2" /></svg></button>
          </div>

          <div class="plate">
            <svg class="plate-sweep" viewBox="0 0 244 40" preserveAspectRatio="none"><path d="M60 0H236Q244 4 244 14Q150 6 60 0Z" fill="#c9c4b2" /><path d="M0 0H160Q100 6 60 22Q30 32 0 37Z" fill="url(#sweep)" /></svg>
            <div class="plate-head">
              <h2>PLATE</h2>
              <button class="leaf green" aria-label="Dock"></button>
              <button class="leaf amber" aria-label="Minimise"></button>
              <button class="leaf red" aria-label="Close plate"></button>
            </div>
            <div class="plate-body">
              <svg class="swatches" viewBox="0 0 64 62">
                <rect x="1" y="1" width="39" height="39" fill="#eae8ee" stroke="#111" stroke-width="2" />
                <path d="M3 38L37 3" stroke="#d4161c" stroke-width="4" />
                <path d="M20 20H60V58H20Z" fill="#2c3036" stroke="#111" stroke-width="2" />
                <path d="M22 22H58V56H22Z" fill="none" stroke="#fff" />
                <path d="M30 29H50V49H30Z" fill="#c8bda4" stroke="#fff" stroke-width="2" />
                <path d="M31 30H49V48H31Z" fill="none" stroke="#111" />
                <path d="M31 30H40V39H31Z" fill="#eae8ee" stroke="#111" />
                <rect x="2" y="44" width="14" height="13" fill="#e6e2e2" stroke="#111" stroke-width="2" />
                <path d="M46 5H58V15" fill="none" stroke="#111" stroke-width="2" />
                <path d="M43 5L48 1V9ZM58 18L54 13H62Z" fill="#111" />
              </svg>
              <div class="modes">
                <button aria-label="None"><svg viewBox="0 0 24 24"><path d="M2 23L23 2" stroke="#d4161c" stroke-width="3" /></svg></button>
                <button aria-label="Registration"><svg viewBox="0 0 24 24"><path d="M11 2V22M1 12H21" stroke="#111" stroke-width="2" /><circle cx="11" cy="12" r="7" fill="none" stroke="#111" stroke-width="2" /><circle cx="11" cy="12" r="3" fill="#d8cdb8" stroke="#111" stroke-width="1" /></svg></button>
                <button aria-label="OverFill"><svg viewBox="0 0 24 24"><circle cx="17" cy="17" r="8" fill="#555" /><path d="M1 1H19V19H1Z" fill="#6c6c6c" /><path d="M10 10H19V19H10Z" fill="#8a8a8a" /></svg></button>
                <button aria-label="White"><svg viewBox="0 0 24 24"><path d="M1 1H23V23H1Z" fill="#fff" /></svg></button>
                <button class="picked" aria-label="Black"><svg viewBox="0 0 24 24"><path d="M1 1H23V23H1Z" fill="#000" /></svg></button>
                <button aria-label="OverStroke"><svg viewBox="0 0 24 24"><circle cx="17" cy="16" r="8" fill="#187230" /><path d="M4 4H17V17H4Z" fill="#dff0dc" stroke="#e02028" stroke-width="5" /><path d="M10 13L12 8V13Z" fill="#3cb45c" /></svg></button>
              </div>
              <div class="preview"></div>
              <button class="orb" aria-label="Apply"><svg viewBox="0 0 16 16"><circle cx="8" cy="8" r="7" fill="#2e9858" stroke="#14603a" /><path d="M4 11L10 4L12 11Z" fill="#fff" /></svg></button>
            </div>
          </div>

          <div class="tooltip" role="tooltip">OverStroke</div>
          <svg class="cursor" viewBox="0 0 20 28"><path d="M1 1V23L6 19L10 27L14 25L10 17H17Z" fill="#fff" stroke="#222" stroke-width="1" /></svg>
          <div class="highlight"></div>
          <svg class="arrow" viewBox="0 0 106 66"><path d="M103 63L14 10" stroke="#f00" stroke-width="3" /><path d="M1 3L24 7L17 13L15 20Z" fill="#f00" /></svg>
        </section>
        <div class="scroll-y">
          <button aria-label="Scroll up"><svg viewBox="0 0 12 12"><path d="M1 9L6 3L11 9" /></svg></button>
          <span class="track"><span class="thumb"></span></span>
          <button aria-label="Scroll down"><svg viewBox="0 0 12 12"><path d="M1 3L6 9L11 3" /></svg></button>
        </div>
        <div class="scroll-x">
          <button aria-label="Scroll left"><svg viewBox="0 0 12 12"><path d="M9 1L3 6L9 11" /></svg></button>
          <button aria-label="Scroll right"><svg viewBox="0 0 12 12"><path d="M3 1L9 6L3 11" /></svg></button>
        </div>
      </div>

      <footer class="statusbar">
        <span class="message">Ready</span>
        <span class="cell wide"></span>
        <span class="cell coords">104;172 mm</span>
        <span class="cell memory">Mem:&nbsp; 7%</span>
        <span class="cell code">00</span>
        <span class="cell small"></span>
        <span class="cell mid"></span>
        <span class="cell last"></span>
      </footer>
    </div>
  </main>

  <div class="watermark">
    <svg viewBox="0 0 34 34"><path d="M2 2C10 8 12 24 2 31C8 31 13 26 13 20H15V31H19V20H21C21 26 26 31 32 31C22 24 24 8 32 2C26 4 21 9 21 14H13C13 9 8 4 2 2Z" fill="#d94038" stroke="#fff" stroke-width="1" /></svg>
    <div>
      <strong>華印社區</strong>
      <small>www.52cnp.com</small>
    </div>
  </div>
</body>

</html>
```

FILE: styles.css
```css
* {
  box-sizing: border-box;
}

body {
  margin: 0;
  height: 100vh;
  display: flex;
  flex-direction: column;
  overflow: hidden;
  position: relative;
  background: #fdfbff;
  border-left: 3px solid #0877b4;
  border-right: 2px solid #002b6e;
  border-bottom: 2px solid #045a80;
  font-family: 'Liberation Sans', 'Noto Sans CJK SC', sans-serif;
  color: #111;
}

button {
  display: flex;
  align-items: center;
  justify-content: center;
  padding: 0;
  border: none;
  background: none;
  font: inherit;
  color: inherit;
}

svg {
  display: block;
  fill: none;
  overflow: visible;
}

.defs {
  position: absolute;
}

/* Title bar */
.titlebar {
  display: flex;
  align-items: center;
  height: 44px;
  flex: none;
  padding-left: 12px;
}

.app-icon {
  width: 22px;
  height: 22px;
}

.titlebar h1 {
  flex: 1;
  margin: 0 0 0 6px;
  font: 400 19px/24px 'Open Sans', sans-serif;
  color: #111;
}

.window-controls {
  display: flex;
}

.window-controls button {
  width: 68px;
  height: 44px;
}

.window-controls svg {
  width: 16px;
  height: 16px;
  stroke: #111;
}

/* Menu */
.menubar {
  display: flex;
  align-items: center;
  height: 29px;
  flex: none;
  padding: 0 2px 2px 7px;
  background: #dbd2c0;
}

.doc-icon {
  width: 22px;
  height: 24px;
}

.menus {
  flex: 1;
  display: flex;
  gap: 24px;
  margin-left: 13px;
}

.menus button {
  font: 400 18px/26px 'Noto Sans CJK SC', sans-serif;
}

.mdi-controls {
  display: flex;
  gap: 2px;
}

.mdi-controls button {
  width: 26px;
  height: 26px;
  background: #fdfbff;
  border: 1px solid #dcd8e0;
}

.mdi-controls svg {
  width: 14px;
  height: 14px;
  stroke: #50606e;
}

/* Main toolbar */
.toolbar {
  display: flex;
  align-items: center;
  height: 50px;
  flex: none;
  padding: 0 0 2px 5px;
  border-top: 2px solid #eee8dd;
  background: linear-gradient(#bfb195, #c9beab 25%, #dcd2c0 52%, #cfc4b2 75%, #bfb195);
}

.grip {
  width: 4px;
  height: 38px;
  border: 1px solid #f5f0e6;
  border-radius: 2px;
  background: #e4dccb;
}

.tool-group {
  display: flex;
  margin: 0 14px 0 6px;
}

.tool-group button {
  width: 47px;
  height: 45px;
}

.tool-group svg {
  width: 40px;
  height: 40px;
}

.tool-group .active {
  border-radius: 0 16px 0 12px;
  background: radial-gradient(#aba38e, #6e6a54 85%);
}

.faded svg {
  opacity: 0.75;
}

.zoom-group {
  margin: 0 10px 0 7px;
}

.badge-letter {
  font: 400 17px 'Liberation Sans', sans-serif;
  fill: #111;
}

.lens-text {
  font: 700 10px 'Liberation Sans', sans-serif;
  text-anchor: middle;
  fill: #0b4e9c;
}

.field {
  width: 79px;
  height: 28px;
  margin-right: 16px;
  padding: 0;
  border: 2px solid;
  border-color: #6b5c40 #e9e2d5 #e9e2d5 #3c3424;
  background: transparent;
  font: 700 16px 'Liberation Serif', serif;
  text-align: center;
}

/* Work area */
.workspace {
  flex: 1;
  min-height: 0;
  display: flex;
}

.sidebar {
  flex: none;
  width: 50px;
  overflow: hidden;
  background: linear-gradient(90deg, #c6baa2, #d8cfbd 45%, #d3c9b6 70%, #bdb096);
}

.sidebar button {
  width: 50px;
  height: 46px;
}

.sidebar svg {
  width: 40px;
  height: 40px;
  filter: drop-shadow(1px 1px 1px rgba(120, 110, 90, 0.5));
}

.rule {
  display: block;
  height: 4px;
  margin: 5px 5px 6px 6px;
  border-radius: 2px;
  background: #f1ebe0;
}

button + .rule {
  margin: 14px 5px 6px 6px;
}

.v {
  stroke: #bb6258;
  stroke-width: 2;
  stroke-dasharray: 6 3;
}

.h {
  stroke: #5e8462;
  stroke-width: 2;
  stroke-dasharray: 7 3;
}

.strong .v {
  stroke: #cc2626;
}

.strong .h {
  stroke: #217a3a;
}

.box {
  fill: #aca690;
  fill-opacity: 0.5;
  stroke: #7d765f;
  stroke-width: 2;
}

.disc {
  fill: #c5c3cc;
  fill-opacity: 0.7;
  stroke: #7c88bc;
  stroke-width: 2;
}

.bars {
  stroke: #6f78ae;
  stroke-width: 2;
}

.solid {
  fill: #9a969c;
  stroke: #6670b0;
  stroke-width: 2;
}

.light {
  fill: #bbb5b8;
  stroke: #8f96c0;
  stroke-width: 1;
}

.dark {
  fill: #8589a8;
  stroke: #5c68b0;
  stroke-width: 2;
}

.content {
  flex: 1;
  min-width: 0;
  display: flex;
  flex-direction: column;
  padding-right: 3px;
}

.viewport {
  flex: 1;
  min-height: 0;
  display: grid;
  grid-template-columns: 1fr 23px;
  grid-template-rows: 1fr 23px;
  border: 2px solid #6a686c;
  border-left-width: 3px;
  background: #e6e4e8;
}

.canvas {
  position: relative;
  background: #fdfbff;
  overflow: hidden;
}

.guide {
  position: absolute;
  top: 0;
  bottom: 4px;
  width: 2px;
  background: #2fe02f;
}

.guide-left {
  left: 580px;
}

.guide-right {
  left: 1360px;
}

/* Scrollbars */
.scroll-y {
  grid-row: 1 / 3;
  grid-column: 2;
  display: flex;
  flex-direction: column;
}

.scroll-y button {
  height: 26px;
}

.scroll-y .track {
  flex: 1;
  padding: 93px 1px 41px 0;
}

.thumb {
  display: block;
  height: 100%;
  background: #b8b6ba;
}

.scroll-y svg,
.scroll-x svg {
  width: 12px;
  height: 12px;
  stroke: #48464a;
  stroke-width: 3;
}

.scroll-y button:last-child {
  margin-bottom: 23px;
}

.scroll-x {
  display: flex;
  justify-content: space-between;
}

.scroll-x button {
  width: 26px;
}

.scroll-x svg {
  stroke: #aaa8ac;
}

/* Floating tools palette */
.tools {
  position: absolute;
  left: 1px;
  top: 2px;
  display: grid;
  grid-template-columns: 46px 47px;
  grid-auto-rows: 46px;
  padding: 34px 2px 5px 6px;
  border: 1px solid #111;
  border-right-width: 2px;
  border-radius: 0 14px 0 14px;
  box-shadow: inset 0 0 0 2px #eee6d8;
  background: linear-gradient(90deg, #beb397, #d9cfbc 22%, #ddd2c0 32%, #c2b79e 50%, #d9cfbc 68%, #ddd2c0 78%, #b8ac90);
}

.tools-sweep {
  position: absolute;
  left: 2px;
  top: 2px;
  width: 97px;
  height: 37px;
}

.tools button {
  position: relative;
}

.tools button > svg {
  width: 40px;
  height: 40px;
  filter: drop-shadow(0 0 1px #fff) drop-shadow(2px 2px 1px rgba(60, 50, 30, 0.5));
}

.tools .active {
  border-radius: 0 12px 0 12px;
  background: radial-gradient(#aaa28c, #75715c 85%);
}

.tools .more::after {
  content: '';
  position: absolute;
  right: 2px;
  bottom: 2px;
  border-left: 8px solid transparent;
  border-bottom: 8px solid #dd8b12;
}

.big-t {
  font: 700 49px 'Liberation Serif', serif;
  text-anchor: middle;
  fill: #1a58a4;
}

.flag-letter {
  font: 700 13px 'Liberation Sans', sans-serif;
  fill: #fff;
}

/* PLATE panel */
.plate {
  position: absolute;
  left: 822px;
  top: 244px;
  width: 248px;
  height: 116px;
  border: 2px solid #111;
  border-radius: 0 14px 0 14px;
  box-shadow: inset 0 0 0 1px #f4eee2;
  background: linear-gradient(90deg, #c4b89f, #d8cdb8 30%, #dfd5c4 65%, #cfc3ae 90%, #bdb196);
}

.plate-sweep {
  position: absolute;
  left: 1px;
  top: 1px;
  width: 242px;
  height: 40px;
}

.plate-head {
  position: relative;
  display: flex;
  align-items: center;
  gap: 8px;
  height: 43px;
  padding: 0 10px 7px 11px;
}

.plate-head h2 {
  flex: 1;
  margin: 0;
  padding-top: 3px;
  font: 700 17px/20px 'Liberation Sans', sans-serif;
  color: #33291c;
}

.leaf {
  width: 18px;
  height: 18px;
  border: 2px solid #2f8a24;
  border-radius: 0 9px 0 9px;
  background: linear-gradient(135deg, #3fc02c, #6cf05a);
}

.leaf.amber {
  border-color: #94600c;
  background: linear-gradient(135deg, #b8740c, #eaa428);
}

.leaf.red {
  border-color: #a03c34;
  background: linear-gradient(135deg, #bc1c1c, #f0908a);
}

.plate-body {
  display: flex;
  padding-left: 7px;
}

.swatches {
  width: 64px;
  height: 62px;
}

.modes {
  display: grid;
  grid-template-columns: repeat(3, 24px);
  grid-auto-rows: 24px;
  gap: 6px 8px;
  padding: 2px 9px 0 4px;
}

.modes svg {
  width: 24px;
  height: 24px;
}

.picked {
  box-shadow: 0 0 0 2px #958d70;
  border-radius: 0 6px 0 6px;
}

.preview {
  width: 52px;
  height: 63px;
  border: 1px solid #f0ece4;
  background: #2b2f34;
}

.orb {
  align-self: flex-end;
}

.orb svg {
  width: 16px;
  height: 16px;
}

.tooltip {
  position: absolute;
  left: 975px;
  top: 360px;
  padding: 0 4px;
  border: 1px solid #333;
  background: #ffffe3;
  font: 400 18px/29px 'Noto Sans', sans-serif;
  color: #2c2c2c;
}

.cursor {
  position: absolute;
  left: 965px;
  top: 336px;
  width: 20px;
  height: 28px;
}

.highlight {
  position: absolute;
  left: 957px;
  top: 317px;
  width: 137px;
  height: 85px;
  border: 2px solid #f00;
  box-shadow: 2px 3px 5px rgba(0, 0, 0, 0.4);
}

.arrow {
  position: absolute;
  left: 1097px;
  top: 410px;
  width: 106px;
  height: 66px;
}

/* Status bar */
.statusbar {
  display: flex;
  flex: none;
  height: 28px;
  margin-top: 2px;
  border: 2px solid #9a8a6c;
  border-left-width: 1px;
  border-bottom-width: 1px;
  background: #dcd2c0;
  font-size: 16px;
  line-height: 25px;
}

.message {
  flex: 1;
  padding-left: 4px;
}

.cell {
  border-left: 2px solid #8f7f62;
  white-space: nowrap;
}

.wide {
  width: 145px;
}

.coords {
  width: 140px;
  padding-left: 20px;
}

.memory {
  width: 108px;
  padding-left: 2px;
}

.code {
  width: 44px;
  padding-left: 7px;
}

.small {
  width: 45px;
}

.mid {
  width: 58px;
}

.last {
  width: 46px;
}

/* Site mark in the corner */
.watermark {
  position: absolute;
  right: 0;
  bottom: 0;
  display: flex;
  align-items: center;
  gap: 6px;
}

.watermark svg {
  width: 34px;
  height: 34px;
}

.watermark strong {
  display: block;
  font: 500 21px/24px 'Noto Sans CJK TC', sans-serif;
  color: #f0a040;
  text-shadow: 0 0 2px #fff, 0 0 2px #fff;
}

.watermark small {
  display: block;
  font: 400 10px/12px 'DejaVu Sans', sans-serif;
  color: #555;
  text-shadow: 0 0 2px #fff, 0 0 2px #fff;
}
```
